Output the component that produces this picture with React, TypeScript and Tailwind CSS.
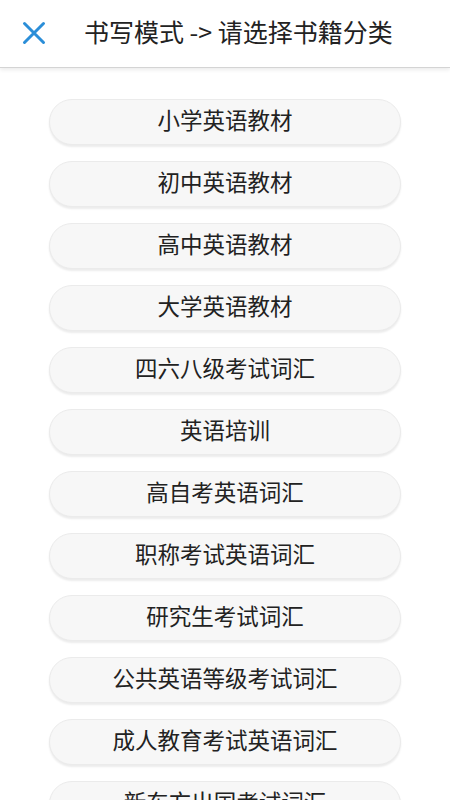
const CATEGORIES = [
  '小学英语教材',
  '初中英语教材',
  '高中英语教材',
  '大学英语教材',
  '四六八级考试词汇',
  '英语培训',
  '高自考英语词汇',
  '职称考试英语词汇',
  '研究生考试词汇',
  '公共英语等级考试词汇',
  '成人教育考试英语词汇',
  '新东方出国考试词汇',
];

const font = { fontFamily: '"Noto Sans CJK SC", "Noto Sans", sans-serif' };

export default function App() {
  return (
    <div className="w-[450px] h-[800px] overflow-hidden bg-white" style={font}>
      {/* Top bar */}
      <div className="h-[68px] flex items-center border-b border-[#d4d4d4] shadow-[0_2px_4px_rgba(0,0,0,0.08)] relative z-10">
        <button className="w-[66px] h-full flex items-center justify-center pl-[1px] pb-[2px]">
          <svg width="24" height="24" viewBox="0 0 24 24" fill="none">
            <path d="M2.5 2.5 L21.5 21.5 M21.5 2.5 L2.5 21.5" stroke="#2b8ed8" strokeWidth="3" strokeLinecap="round" />
          </svg>
        </button>
        <h1 className="ml-[18px] pb-[4px] text-[25px] leading-none text-[#222]">书写模式 -&gt; 请选择书籍分类</h1>
      </div>

      {/* Category list */}
      <div className="flex flex-col items-center gap-[16px] pt-[31px]">
        {CATEGORIES.map(name => (
          <button
            key={name}
            className="w-[352px] h-[46px] shrink-0 rounded-full bg-[#f7f7f7] border border-[#ebebeb] shadow-[0_2px_2px_rgba(0,0,0,0.08)] flex items-center justify-center pb-[5px] text-[22.5px] leading-none text-[#222]"
          >
            {name}
          </button>
        ))}
      </div>
    </div>
  );
}
